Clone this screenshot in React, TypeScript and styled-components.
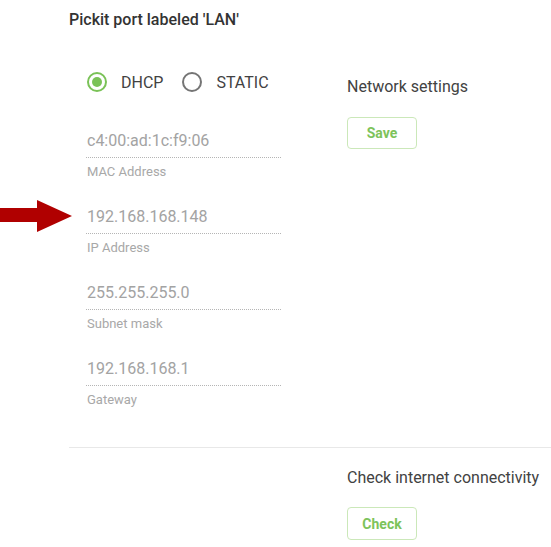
import React from "react";
import styled, { createGlobalStyle } from "styled-components";

const Global = createGlobalStyle`
  html, body { margin: 0; padding: 0; background: #fff; }
  body { font-family: Roboto, "Noto Sans", sans-serif; }
`;

const Page = styled.div`
  position: relative;
  width: 551px;
  height: 547px;
  overflow: hidden;
  padding: 10px 0 0 69px;
  box-sizing: border-box;
`;

const Title = styled.h2`
  margin: 0;
  font-size: 16px;
  line-height: 20px;
  font-weight: 500;
  color: #333;
`;

const Section = styled.div`
  display: grid;
  grid-template-columns: 278px 1fr;
`;

const LeftCol = styled.div`
  padding: 40px 0 0 18px;
  display: flex;
  flex-direction: column;
`;

const RightCol = styled.div<{ $top: number }>`
  padding-top: ${(p) => p.$top}px;
  display: flex;
  flex-direction: column;
  align-items: flex-start;
`;

const RadioRow = styled.div`
  display: flex;
  align-items: center;
  height: 24px;
  gap: 19px;
  margin-bottom: 37px;
`;

const RadioOption = styled.label`
  display: flex;
  align-items: center;
  gap: 14px;
  font-size: 16px;
  color: #424242;
`;

const RadioCircle = styled.span<{ $checked?: boolean }>`
  width: 20px;
  height: 20px;
  box-sizing: border-box;
  border-radius: 50%;
  border: 2px solid ${(p) => (p.$checked ? "#7ac257" : "#757575")};
  display: flex;
  align-items: center;
  justify-content: center;
  &::after {
    content: "";
    display: ${(p) => (p.$checked ? "block" : "none")};
    width: 10px;
    height: 10px;
    border-radius: 50%;
    background: #7ac257;
  }
`;

const Fields = styled.div`
  display: flex;
  flex-direction: column;
  gap: 27px;
`;

const Field = styled.div`
  display: flex;
  flex-direction: column;
  width: 195px;
  margin-left: -1px;
`;

const Value = styled.div`
  font-size: 16px;
  line-height: 20px;
  color: #a3a3a3;
  padding: 0 0 6px 1px;
  border-bottom: 1px dotted #b5b5b5;
`;

const Label = styled.div`
  font-size: 13px;
  line-height: 16px;
  color: #a8a8a8;
  margin-top: 6px;
  padding-left: 1px;
`;

const Heading = styled.div`
  font-size: 16px;
  line-height: 20px;
  color: #424242;
`;

const OutlineButton = styled.button<{ $h: number; $mt: number }>`
  width: 70px;
  height: ${(p) => p.$h}px;
  margin-top: ${(p) => p.$mt}px;
  background: #fff;
  border: 1.5px solid #cbe8b9;
  border-radius: 4px;
  color: #7dc35b;
  font-family: Roboto, sans-serif;
  font-size: 14px;
  font-weight: 700;
  padding: 0;
`;

const Divider = styled.hr`
  margin: 39px 0 0 0;
  border: none;
  border-top: 1px solid #e8e8e8;
  width: 482px;
`;

const Arrow = styled.svg`
  position: absolute;
  left: 0;
  top: 200px;
`;

const fields = [
  { value: "c4:00:ad:1c:f9:06", label: "MAC Address" },
  { value: "192.168.168.148", label: "IP Address" },
  { value: "255.255.255.0", label: "Subnet mask" },
  { value: "192.168.168.1", label: "Gateway" },
];

export default function App() {
  return (
    <>
      <Global />
      <Page>
        <Title>Pickit port labeled 'LAN'</Title>
        <Section>
          <LeftCol>
            <RadioRow>
              <RadioOption>
                <RadioCircle $checked />
                DHCP
              </RadioOption>
              <RadioOption>
                <RadioCircle />
                STATIC
              </RadioOption>
            </RadioRow>
            <Fields>
              {fields.map((f) => (
                <Field key={f.label}>
                  <Value>{f.value}</Value>
                  <Label>{f.label}</Label>
                </Field>
              ))}
            </Fields>
          </LeftCol>
          <RightCol $top={47}>
            <Heading>Network settings</Heading>
            <OutlineButton $h={32} $mt={20}>Save</OutlineButton>
          </RightCol>
        </Section>
        <Divider />
        <Section>
          <div />
          <RightCol $top={20}>
            <Heading>Check internet connectivity</Heading>
            <OutlineButton $h={33} $mt={19}>Check</OutlineButton>
          </RightCol>
        </Section>
        <Arrow width="73" height="33" viewBox="0 0 73 33">
          <polygon points="0,8 37,8 37,0 72,16 37,32 37,22 0,22" fill="#b00000" />
        </Arrow>
      </Page>
    </>
  );
}
